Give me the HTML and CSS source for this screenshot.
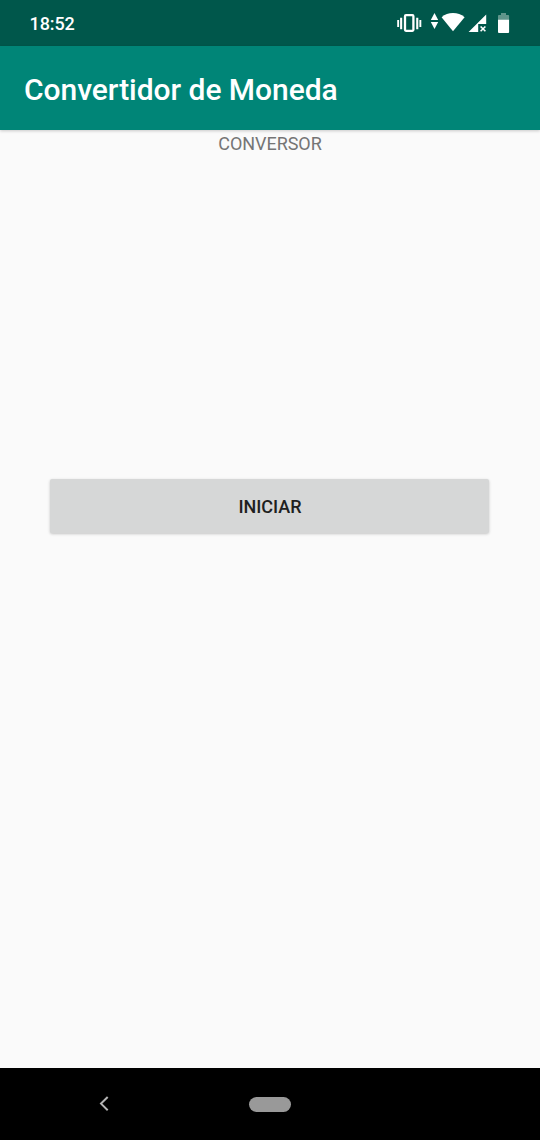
FILE: index.html
```html
<!DOCTYPE html>
<html lang="es">
<head>
<meta charset="utf-8">
<title>Convertidor de Moneda</title>
<link rel="stylesheet" href="styles.css">
</head>
<body>
<div class="screen">
  <div class="status-bar">
    <span class="clock">18:52</span>
    <svg class="status-icons" width="130" height="46" viewBox="390 0 130 46" fill="#fff">
      <path d="M397.2 20h1.9v7h-1.9zM400.1 17.8h2.1v11.4h-2.1zM416.2 17.8h2.1v11.4h-2.1zM419.4 20h1.9v7h-1.9z"/>
      <rect x="405" y="15.2" width="8.4" height="15.6" rx="1" fill="none" stroke="#fff" stroke-width="2.3"/>
      <path d="M434.5 13l3.7 7h-7.4zM434.5 29l3.7-7h-7.4z"/>
      <path d="M453 31.3L441.6 17.2Q446.4 13 453 13T464.6 17.2Z"/>
      <path d="M486.2 14.5V24H478.2V32H468.6Z"/>
      <path d="M480.6 26.5l4.8 4.8m0-4.8l-4.8 4.8" stroke="#fff" stroke-width="1.6"/>
      <path d="M501 13h5v2h2.2q.9 0 .9 1V20H498V16q0-1 .9-1H501z" fill="#5f958b"/>
      <path d="M498 19.7h11.1V32q0 1-1 1H499q-1 0-1-1z"/>
    </svg>
  </div>
  <header class="app-bar"><h1 class="title">Convertidor de Moneda</h1></header>
  <main class="content">
    <div class="heading">CONVERSOR</div>
    <button class="start" type="button">INICIAR</button>
  </main>
  <nav class="nav-bar">
    <svg class="back" width="12" height="18" viewBox="0 0 12 18" fill="none" stroke="#b4b4b4" stroke-width="2"><path d="M9.7 2L3 8.6l6.7 6.6"/></svg>
    <div class="home"></div>
  </nav>
</div>
</body>
</html>
```

FILE: styles.css
```css
body {
  margin: 0;
  font-family: Roboto, sans-serif;
}
.screen {
  display: flex;
  flex-direction: column;
  width: 540px;
  height: 1140px;
  background: #fafafa;
}
.status-bar {
  display: flex;
  justify-content: space-between;
  align-items: center;
  box-sizing: border-box;
  height: 46px;
  padding: 0 20px 0 29.5px;
  background: #00574b;
}
.clock {
  padding-top: 2px;
  font-size: 18px;
  font-weight: 500;
  letter-spacing: -.1px;
  line-height: 24px;
  color: #fff;
}
.app-bar {
  display: flex;
  align-items: center;
  height: 84px;
  padding: 0 24px;
  background: #008577;
  box-shadow: 0 1px 3px rgba(0, 0, 0, .2);
}
.title {
  margin: 4px 0 0;
  font-size: 30px;
  font-weight: 500;
  letter-spacing: -.04px;
  line-height: 40px;
  color: #fff;
}
.content {
  display: flex;
  flex: 1;
  flex-direction: column;
}
.heading {
  padding-top: 2px;
  font-size: 18px;
  letter-spacing: -.05px;
  line-height: 24px;
  text-align: center;
  color: #757575;
}
.start {
  height: 54px;
  margin: 323px 51px 0 50px;
  padding: 2px 0 0 1px;
  border: 0;
  border-radius: 2px;
  background: #d6d7d7;
  box-shadow: 0 1px 3px rgba(0, 0, 0, .22);
  font: 500 18px/24px Roboto, sans-serif;
  color: #202020;
}
.nav-bar {
  display: flex;
  align-items: center;
  height: 72px;
  padding-left: 97.5px;
  background: #000;
}
.home {
  width: 42px;
  height: 15px;
  margin-left: 139.5px;
  border-radius: 8px;
  background: #999;
}
```
